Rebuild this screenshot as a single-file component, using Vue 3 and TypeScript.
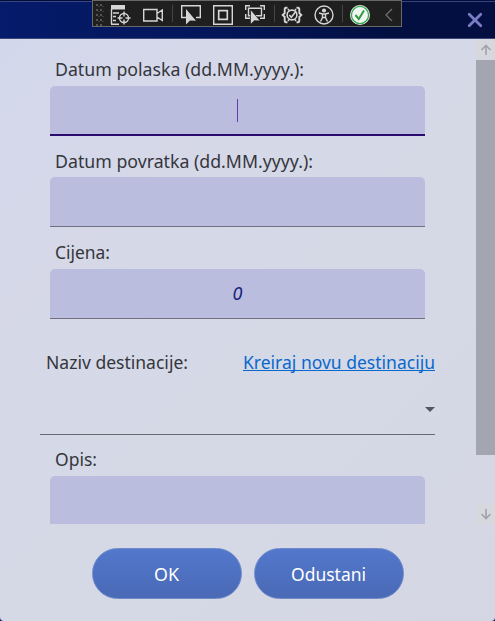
<script setup lang="ts">
import { ref } from 'vue'

interface Field {
  id: string
  label: string
  width: number
}

const dateFields: Field[] = [
  { id: 'departure', label: 'Datum polaska (dd.MM.yyyy.):', width: 249 },
  { id: 'return', label: 'Datum povratka (dd.MM.yyyy.):', width: 258 },
]
const price = ref<number>(0)
const focused = ref<string>('departure')
</script>

<template>
  <main class="window">
    <header class="titlebar">
      <button class="close" aria-label="Zatvori">
        <svg width="16" height="16" viewBox="0 0 16 16"><path d="M2.200 2.200 13.800 13.800M13.800 2.200 2.200 13.800" /></svg>
      </button>
    </header>

    <div class="toolbar">
      <svg class="grip" width="16" height="24" viewBox="0 0 16 24">
        <path d="M4 2v22M8 2v22" stroke="#555" stroke-width="2" stroke-dasharray="2 3" />
        <path d="M6 4v20M10 4v20" stroke="#3c3c3c" stroke-width="2" stroke-dasharray="1 4" />
      </svg>
      <svg class="icon" viewBox="0 0 24 24">
        <path d="M2 3h14v4.500H2z" fill="#d6d6d6" stroke="none" />
        <path d="M2 22.300h8M4 11h6M4 14.500h3M4 18.500h3M2.500 7v15" />
        <circle cx="15" cy="16" r="4.500" /><path d="M15 9.500v5M15 17.500v5M8.500 16h5M16.500 16h5" />
      </svg>
      <svg class="icon" viewBox="0 0 24 24">
        <path d="M2.700 7.500h13.300v11.500H2.700zM16 11.500l5.300-3.500v10.500l-5.300-3.500" />
      </svg>
      <i class="sep first" />
      <svg class="icon" viewBox="0 0 24 24">
        <path d="M7 15.500H2.700V3.700h18.600v11.800H17" />
        <path d="M7 7v15.500l4-4 6 .2z" fill="#d6d6d6" stroke="none" />
      </svg>
      <svg class="icon" viewBox="0 0 24 24">
        <path d="M2.700 3.700h18.600v18.600H2.700z" /><path d="M7.700 8.700h8.600v8.600H7.700z" stroke-width="1.700" />
      </svg>
      <svg class="icon" viewBox="0 0 24 24">
        <path d="M2.700 8V3.700H7M17 3.700h4.300V8M21.300 12v4.300H17M2.700 12v4.300H7" />
        <path d="M5.500 6.300h13v7.500h-13z" />
        <path d="M7.500 7.500v15l3.700-3.800 6 .2z" fill="#d6d6d6" stroke="#1f1f1f" stroke-width=".7" />
      </svg>
      <i class="sep second" />
      <svg class="icon" viewBox="0 0 24 24">
        <path d="M7.500 5.700H6Q4.700 5.700 4.700 7.500v3.500L2.700 13l2 2v3.500q0 1.800 1.300 1.800h1.500M16.500 5.700H18q1.300 0 1.300 1.800v3.500l2 2-2 2v3.500q0 1.800-1.300 1.800h-1.500" stroke-width="1.900" />
        <circle cx="12" cy="13" r="4.900" stroke-width="1.600" /><path d="m9.300 13 2 2.300 4.700-6M8 7l1 1.500M16 7l-1 1.500M8 19l1-1.500M16 19l-1-1.500" stroke-width="1.600" />
      </svg>
      <svg class="icon" viewBox="0 0 24 24">
        <circle cx="12" cy="13" r="9" /><circle cx="12" cy="8.500" r="1.400" fill="#d6d6d6" />
        <path d="M7 11l3.500 1h3l3.500-1M10.500 12v3.500L8.500 19.500M13.500 12v3.500l2 4M10.500 15.500h3" />
      </svg>
      <i class="sep third" />
      <svg class="icon" viewBox="0 0 24 24">
        <circle cx="12" cy="13" r="10" fill="#f2f6f2" stroke="none" />
        <circle cx="12" cy="13" r="8.600" stroke="#35a853" stroke-width="1.300" />
        <path d="m7.500 13 3.300 4L16 8.500" stroke="#319b3d" stroke-width="2" />
      </svg>
      <svg class="chevron" width="8" height="14" viewBox="0 0 8 14"><path d="M7 2 1 8l6 6" /></svg>
    </div>

    <section class="scroll-area">
      <form class="form">
        <div v-for="f in dateFields" :key="f.id" class="field">
          <label><svg class="label-text" :width="f.width" height="24"><text x="0" y="18" :textLength="f.width" lengthAdjust="spacingAndGlyphs">{{ f.label }}</text></svg></label>
          <div class="input" :class="{ focused: focused === f.id }"><span v-if="focused === f.id" class="caret" /></div>
        </div>
        <div class="field price">
          <label><svg class="label-text" width="55" height="24"><text x="0" y="18" textLength="55" lengthAdjust="spacingAndGlyphs">Cijena:</text></svg></label>
          <div class="input value">{{ price }}</div>
        </div>
        <div class="destination">
          <svg class="label-text" width="143" height="26"><text x="0" y="19" textLength="142" lengthAdjust="spacingAndGlyphs">Naziv destinacije:</text></svg>
          <a class="link"><svg class="label-text" width="192" height="26"><text x="0" y="19" textLength="192" lengthAdjust="spacingAndGlyphs">Kreiraj novu destinaciju</text><path d="M0 20.500h192" /></svg></a>
        </div>
        <div class="combo"><svg width="10" height="5" viewBox="0 0 10 5"><path d="M0 0h10L5 5z" /></svg></div>
        <div class="field last">
          <label><svg class="label-text" width="42" height="24"><text x="0" y="18" textLength="42" lengthAdjust="spacingAndGlyphs">Opis:</text></svg></label>
          <div class="input" />
        </div>
      </form>
      <aside class="scrollbar">
        <span class="arrow"><svg width="12" height="12" viewBox="0 0 12 12"><path d="M6 11V2M1.500 6 6 1.500 10.500 6" /></svg></span>
        <span class="thumb" />
        <span class="arrow end"><svg width="12" height="12" viewBox="0 0 12 12"><path d="M6 1v9M1.500 6 6 10.500 10.500 6" /></svg></span>
      </aside>
    </section>

    <footer class="actions">
      <button class="action"><svg width="26" height="26"><text x="0" y="20" textLength="25" lengthAdjust="spacingAndGlyphs">OK</text></svg></button>
      <button class="action"><svg width="76" height="26"><text x="0" y="20" textLength="75" lengthAdjust="spacingAndGlyphs">Odustani</text></svg></button>
    </footer>
  </main>
</template>

<style>
body { background: #17245f; }
</style>

<style scoped>
.window {
  position: relative;
  box-sizing: border-box;
  width: 495px;
  height: 621px;
  overflow: hidden;
  border-radius: 0 0 4px 4px;
  background: linear-gradient(135deg, #d2d8ec 0%, #d6d8e8 28%, #d5d9e6 55%, #d5d6e4 100%);
  font-family: "Noto Sans", "Open Sans", sans-serif;
  font-size: 18.5px;
  color: #34363c;
}
.titlebar {
  box-sizing: border-box;
  height: 39px;
  display: flex;
  align-items: flex-start;
  justify-content: flex-end;
  padding: 10px 12px 0 0;
  border-bottom: 1px solid #3c4679;
  background: linear-gradient(#020c3c 0 1px, #38457e 1px 2px, transparent 2px), linear-gradient(90deg, #051b6b, #041659 45%, #020f40 80%);
}
button { padding: 0; border: 0; font: inherit; }
.close { width: 16px; height: 18px; background: none; }
.close svg { display: block; margin-top: 2px; fill: none; stroke: #7b7bc8; stroke-width: 2.8; stroke-linecap: round; }
.toolbar {
  position: absolute;
  top: 0;
  left: 92px;
  box-sizing: border-box;
  width: 310px;
  height: 27px;
  display: flex;
  align-items: center;
  background: #1f1f1f;
  border: 1px solid #686868;
}
.toolbar svg { flex: none; fill: none; }
.icon { width: 24px; height: 24px; stroke: #d6d6d6; stroke-width: 1.4; }
.icon + .icon { margin-left: 8px; }
.sep { width: 1px; height: 17px; background: #454545; }
.first { margin: 0 6px 0 7px; }
.second { margin: 0 5px 0 7px; }
.third { margin: 0 5px 0 6px; }
.chevron { margin-left: 13px; stroke: #707070; stroke-width: 1.3; }
.scroll-area { display: flex; justify-content: space-between; height: 485px; overflow: hidden; }
.form { width: 395px; padding: 6px 0 0 40px; }
.field { padding: 0 10px; }
.field label { box-sizing: border-box; height: 41px; display: flex; align-items: flex-end; padding: 0 5px 4px; }
.field + .field label { padding-bottom: 3px; }
.field.price label { height: 42px; padding-bottom: 4px; }
.label-text { display: block; flex: none; overflow: visible; fill: currentColor; }
.input {
  box-sizing: border-box;
  height: 50px;
  display: flex;
  align-items: center;
  justify-content: center;
  border-radius: 5px 5px 0 0;
  border-bottom: 1px solid #70707f;
  background: #bbbddf;
}
.input.focused { border-bottom: 2px solid #2b0b70; }
.caret { width: 1px; height: 23px; background: #653aaa; }
.value { color: #19247c; font-size: 18px; font-style: italic; padding-bottom: 1px; }
.destination { display: flex; justify-content: space-between; margin-top: 31px; padding: 0 .5px 0 5.5px; height: 26px; }
.link { color: #0868cc; }
.link path { stroke: currentColor; stroke-width: 1; }
.combo {
  box-sizing: border-box;
  height: 59px;
  display: flex;
  justify-content: flex-end;
  padding-top: 31px;
  border-bottom: 1px solid #696972;
}
.combo svg { fill: #55565f; }
.last .input { height: 60px; }
.scrollbar { width: 19px; display: flex; flex-direction: column; }
.arrow { height: 21px; display: flex; align-items: center; justify-content: center; background: #d6d8de; }
.arrow svg { fill: none; stroke: #a1a3ac; stroke-width: 1.6; }
.thumb { height: 395px; background: #a3a5b1; }
.end { margin-top: auto; height: 20px; }
.actions { display: flex; justify-content: center; gap: 12px; padding: 24px 0 0 1px; }
.action {
  width: 150px;
  height: 51px;
  display: flex;
  align-items: center;
  justify-content: center;
  color: #fff;
  border: 1px solid #6f89c9;
  border-radius: 26px;
  background: linear-gradient(#5278cc, #4a69b5) border-box;
}
.action svg { fill: currentColor; overflow: visible; margin-top: 1px; }
</style>
